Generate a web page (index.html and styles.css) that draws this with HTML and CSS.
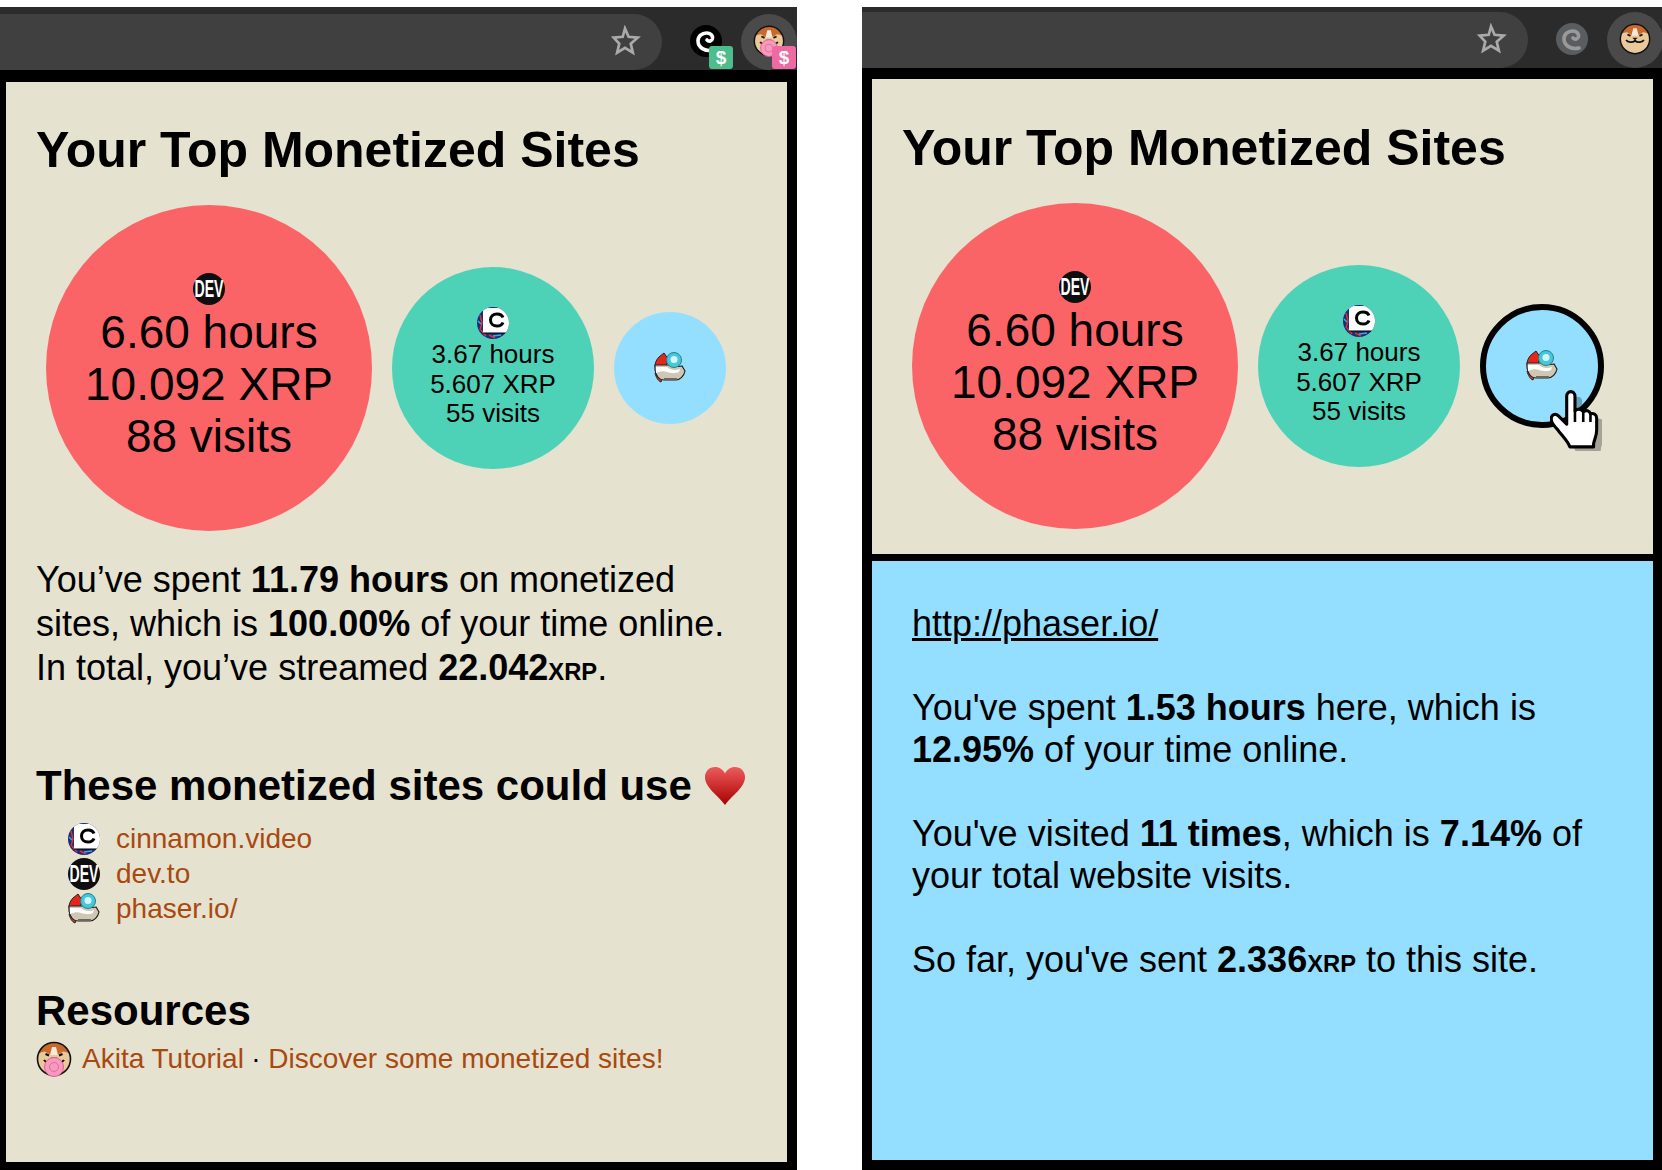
FILE: index.html
```html
<!DOCTYPE html>
<html lang="en">
<head>
    <meta charset="UTF-8">
    <meta name="viewport" content="width=device-width, initial-scale=1.0">
    <title>Akita - Your Top Monetized Sites</title>
    <link rel="stylesheet" href="styles.css">
</head>
<body>
    <svg class="sprites" width="0" height="0">
        <defs>
            <linearGradient id="heartFill" x1="0" y1="0" x2="0" y2="1">
                <stop offset="0" stop-color="#ee5b5b"/>
                <stop offset="1" stop-color="#a80000"/>
            </linearGradient>
            <clipPath id="cinnamonClip"><circle cx="16" cy="16" r="16"/></clipPath>
            <clipPath id="akitaClip"><circle cx="18" cy="18" r="16"/></clipPath>
            <symbol id="icon-star" viewBox="0 0 24 24">
                <path d="M12 2.6l2.7 6.3 6.8.6-5.200 4.500 1.600 6.700-5.900-3.600-5.900 3.600 1.600-6.700L3.500 9.500l6.800-.6z" fill="none" stroke="#aaaaaa" stroke-width="2"/>
            </symbol>
            <symbol id="icon-dev" viewBox="0 0 32 32">
                <circle cx="16" cy="16" r="16" fill="#0e0e10"/>
                <text x="16" y="24" text-anchor="middle" class="dev-text" textLength="29" lengthAdjust="spacingAndGlyphs">DEV</text>
            </symbol>
            <symbol id="icon-cinnamon" viewBox="0 0 32 32">
                <g clip-path="url(#cinnamonClip)">
                    <rect width="32" height="32" fill="#1c2a78"/>
                    <path d="M3 8l2 8-2 7M4 23l5 6M12 28l6 3" stroke="#d8342c" stroke-width="1.5" fill="none"/>
                    <path d="M1 14l3 3M16 29l8-1" stroke="#3fa7d6" stroke-width="1.5" fill="none"/>
                    <rect x="6" y="1" width="26" height="25" fill="#ffffff"/>
                    <path d="M6 26h26" stroke="#000000" stroke-width="1"/>
                    <path d="M26 10.500c-1-2.500-3.500-3.500-6-3.500-3.800 0-6.500 2.200-6.500 6s2.700 6 6.500 6c2.500 0 5-1 6-3.500" fill="none" stroke="#000000" stroke-width="3"/>
                </g>
            </symbol>
            <symbol id="icon-phaser" viewBox="0 0 32 32">
                <path d="M5 5l5-4 4 6-2 8H1c0-4 1-7 4-10z" fill="#e5261c" stroke="#222222"/>
                <path d="M1 21l9 2-3 7c-3-1-5-5-6-9z" fill="#d9401a" stroke="#222222"/>
                <path d="M1 13h14c4 1 9 2 13 1l3 5c-1 5-5 9-9 9H10c-5 0-8-5-9-10z" fill="#cfc6b4" stroke="#222222" stroke-width="1.2"/>
                <path d="M2 15h11c3 3 8 4 13 2l-1 3c-4 2-9 1-12 0-3-1-6-1-11 1z" fill="#ffffff"/>
                <path d="M10 27h13" stroke="#6f685a" stroke-width="2"/>
                <circle cx="20" cy="8" r="7.500" fill="#45c8da" stroke="#2a7f8c"/>
                <circle cx="20" cy="7.500" r="3.500" fill="#d4f6fa"/>
            </symbol>
            <symbol id="icon-curl" viewBox="0 0 32 32">
                <circle cx="16" cy="16" r="16" fill="currentColor"/>
                <path d="M23 25c-7 2-15-2-15-9 0-5 4-8 8.500-8 4 0 6.500 2.500 6 5.500-.5 2.500-3.500 3.500-5.500 1.500" fill="none" stroke="var(--curl, #ffffff)" stroke-width="3.600" stroke-linecap="round"/>
            </symbol>
            <symbol id="icon-akita" viewBox="0 0 36 36">
                <circle cx="18" cy="18" r="16.500" fill="#e9c89b"/>
                <g clip-path="url(#akitaClip)">
                    <path d="M0 14C3 6 10 1 18 1s15 5 18 13c-3-2-6-3-9-3.500l-5 3h-8l-5-3C6 11 3 12 0 14z" fill="#c9692c"/>
                    <path d="M14 14l2-8h4l2 8z" fill="#f3ead8"/>
                </g>
                <circle cx="18" cy="18" r="16.500" fill="none" stroke="#111111" stroke-width="1.600"/>
                <path d="M9.500 13l3.500 1.500M26.500 13l-3.500 1.500" stroke="#111111" stroke-width="2"/>
                <path d="M15 16.500h6l-3 3z" fill="#111111"/>
                <path d="M8 19c2 3 7 3.500 10 1 3 2.500 8 2 10-1" fill="none" stroke="#111111" stroke-width="2"/>
            </symbol>
            <symbol id="icon-akita-tongue" viewBox="0 0 36 36">
                <use href="#icon-akita" width="36" height="36"/>
                <circle cx="18" cy="26" r="9.500" fill="#f79ac0" stroke="#e2608f"/>
                <circle cx="18" cy="26" r="4.500" fill="none" stroke="#e2608f" stroke-width=".8"/>
            </symbol>
            <symbol id="icon-heart" viewBox="0 0 42 40">
                <path d="M21 39C14 29 1 22 1 11 1 5 5.500 1 11 1c4.500 0 8 2.500 10 6.500C23 3.500 26.500 1 31 1c5.500 0 10 4 10 10 0 11-13 18-20 28z" fill="url(#heartFill)"/>
            </symbol>
        </defs>
    </svg>

    <div class="screens">
        <section class="popup popup-main">
            <div class="toolbar">
                <div class="urlbar"><svg class="star"><use href="#icon-star"/></svg></div>
                <div class="ext">
                    <svg class="ext-icon"><use href="#icon-curl"/></svg>
                    <span class="badge badge-green">$</span>
                </div>
                <div class="ext ext-active">
                    <svg class="ext-icon"><use href="#icon-akita-tongue"/></svg>
                    <span class="badge badge-pink">$</span>
                </div>
            </div>
            <div class="panel panel-grow">
                <h1>Your Top Monetized Sites</h1>
                <div class="bubbles">
                    <div class="bubble bubble-red">
                        <svg class="bubble-icon"><use href="#icon-dev"/></svg>
                        <div>6.60 hours</div><div>10.092 XRP</div><div>88 visits</div>
                    </div>
                    <div class="bubble bubble-green">
                        <svg class="bubble-icon"><use href="#icon-cinnamon"/></svg>
                        <div>3.67 hours</div><div>5.607 XRP</div><div>55 visits</div>
                    </div>
                    <div class="bubble bubble-blue">
                        <svg class="bubble-icon"><use href="#icon-phaser"/></svg>
                    </div>
                </div>
                <p class="summary">You&rsquo;ve spent <b>11.79 hours</b> on monetized sites, which is <b>100.00%</b> of your time online. In total, you&rsquo;ve streamed <b>22.042<small>XRP</small></b>.</p>
                <h2 class="love">These monetized sites could use <svg class="heart"><use href="#icon-heart"/></svg></h2>
                <ul class="sites">
                    <li><svg class="site-icon"><use href="#icon-cinnamon"/></svg><a href="#">cinnamon.video</a></li>
                    <li><svg class="site-icon"><use href="#icon-dev"/></svg><a href="#">dev.to</a></li>
                    <li><svg class="site-icon"><use href="#icon-phaser"/></svg><a href="#">phaser.io/</a></li>
                </ul>
                <h2 class="resources">Resources</h2>
                <div class="links">
                    <svg class="akita-icon"><use href="#icon-akita-tongue"/></svg>
                    <a href="#">Akita Tutorial</a><span class="dot">&middot;</span><a href="#">Discover some monetized sites!</a>
                </div>
            </div>
        </section>

        <section class="popup popup-detail">
            <div class="toolbar">
                <div class="urlbar"><svg class="star"><use href="#icon-star"/></svg></div>
                <div class="ext">
                    <svg class="ext-icon curl-grey"><use href="#icon-curl"/></svg>
                </div>
                <div class="ext ext-active">
                    <svg class="ext-icon"><use href="#icon-akita"/></svg>
                </div>
            </div>
            <div class="panel">
                <h1>Your Top Monetized Sites</h1>
                <div class="bubbles">
                    <div class="bubble bubble-red">
                        <svg class="bubble-icon"><use href="#icon-dev"/></svg>
                        <div>6.60 hours</div><div>10.092 XRP</div><div>88 visits</div>
                    </div>
                    <div class="bubble bubble-green">
                        <svg class="bubble-icon"><use href="#icon-cinnamon"/></svg>
                        <div>3.67 hours</div><div>5.607 XRP</div><div>55 visits</div>
                    </div>
                    <div class="bubble bubble-blue bubble-hover">
                        <svg class="bubble-icon"><use href="#icon-phaser"/></svg>
                        <svg class="hand" viewBox="0 0 50 60">
                            <path d="M19 8c0-6 8-6 8 0v14c3-2 6-2 8 1 3-2 6-1 7 2 3-1 6 1 6 4v12c0 5-2 8-3 13v5H22c-2-6-8-11-12-17-3-3-7-7-8-10 0-4 4-6 7-3l10 9z" fill="#000000" opacity=".28" transform="translate(4 4)"/>
                            <path d="M16 7c0-6 8-6 8 0v14c3-2 6-2 8 1 3-2 6-1 7 2 3-1 6 1 6 4v12c0 5-2 8-3 13v3H19c-2-6-8-11-12-17-3-3-6-7-6-10 0-4 4-6 7-3l8 8z" fill="#ffffff" stroke="#000000" stroke-width="3" stroke-linejoin="round"/>
                            <path d="M24 21v11M32 22v10M39 24v8" stroke="#000000" stroke-width="2.5" fill="none"/>
                        </svg>
                    </div>
                </div>
            </div>
            <div class="detail">
                <a href="#" class="detail-url">http://phaser.io/</a>
                <p>You've spent <b>1.53 hours</b> here, which is <b>12.95%</b> of your time online.</p>
                <p>You've visited <b>11 times</b>, which is <b>7.14%</b> of your total website visits.</p>
                <p>So far, you've sent <b>2.336<small>XRP</small></b> to this site.</p>
            </div>
        </section>
    </div>
</body>
</html>
```

FILE: styles.css
```css
html, body {
    margin: 0;
    padding: 0;
    background-color: #ffffff;
}

body {
    font-family: 'Liberation Sans', Arial, sans-serif;
    color: #000000;
    height: 1170px;
    overflow: hidden;
}

.sprites {
    position: absolute;
}

.screens {
    display: flex;
    justify-content: space-between;
    height: 1163px;
    padding-top: 7px;
}

.popup {
    display: flex;
    flex-direction: column;
    background-color: #000000;
    overflow: hidden;
}

.popup-main {
    width: 797px;
    padding: 0 10px 8px 6px;
    box-sizing: border-box;
}

.popup-detail {
    width: 800px;
    padding: 0 9px 10px 10px;
    box-sizing: border-box;
}

.toolbar {
    display: flex;
    align-items: flex-end;
    height: 63px;
    margin: 0 -10px;
    background-color: #2b2b2b;
    flex-shrink: 0;
}

.popup-detail .toolbar {
    height: 61px;
}

.urlbar {
    display: flex;
    align-items: center;
    justify-content: flex-end;
    width: 667px;
    height: 56px;
    padding: 0 21px 2px 0;
    box-sizing: border-box;
    background-color: #404040;
    border-radius: 0 28px 28px 0;
}

.star {
    width: 32px;
    height: 32px;
}

.ext {
    position: relative;
    display: flex;
    align-items: center;
    justify-content: center;
    width: 32px;
    height: 56px;
    margin-left: 28px;
    padding-bottom: 2px;
    box-sizing: border-box;
}

.ext-active {
    width: 56px;
    margin-left: 19px;
    background-color: #4a4a4a;
    border-radius: 28px;
}

.ext-icon {
    width: 32px;
    height: 32px;
    color: #000000;
}

.curl-grey {
    color: #5a5d60;
    --curl: #9a9a9a;
}

.badge {
    position: absolute;
    left: 19px;
    bottom: 1px;
    width: 24px;
    height: 23px;
    border-radius: 3px;
    color: #ffffff;
    font-size: 19px;
    font-weight: bold;
    line-height: 23px;
    text-align: center;
}

.ext-active .badge {
    left: 31px;
}

.badge-green {
    background-color: #4dbd8c;
}

.badge-pink {
    background-color: #ee6aa2;
}

.panel {
    margin-top: 11px;
    padding: 0 30px;
    background-color: #e5e2d0;
    height: 475px;
    flex-shrink: 0;
    box-sizing: border-box;
}

.panel-grow {
    flex: 1;
    height: auto;
    margin-top: 12px;
}

h1 {
    margin: 0;
    padding-top: 38px;
    font-size: 50px;
    line-height: 60px;
    font-weight: bold;
}

.popup-detail h1 {
    padding-top: 39px;
}

.bubbles {
    display: flex;
    align-items: center;
    gap: 20px;
    margin-top: 25px;
    margin-left: 10px;
}

.bubble {
    display: flex;
    flex-direction: column;
    align-items: center;
    justify-content: center;
    border-radius: 50%;
    text-align: center;
    flex-shrink: 0;
    position: relative;
    box-sizing: border-box;
}

.bubble-red {
    width: 326px;
    height: 326px;
    padding-bottom: 2px;
    background-color: #fb6467;
    font-size: 46px;
    line-height: 52px;
}

.bubble-red .bubble-icon {
    width: 32px;
    height: 32px;
    margin-bottom: 1px;
}

.bubble-green {
    width: 202px;
    height: 202px;
    background-color: #4dd2b7;
    font-size: 26px;
    line-height: 29.5px;
}

.bubble-green .bubble-icon {
    width: 32px;
    height: 32px;
    margin-bottom: 1px;
}

.bubble-blue {
    width: 112px;
    height: 112px;
    background-color: #94dfff;
}

.bubble-blue .bubble-icon {
    width: 32px;
    height: 32px;
}

.bubble-hover {
    width: 124px;
    height: 124px;
    border: 6px solid #000000;
}

.dev-text {
    font-family: 'Liberation Sans', sans-serif;
    font-size: 24px;
    font-weight: bold;
    fill: #ffffff;
}

.hand {
    position: absolute;
    left: 64px;
    top: 79px;
    width: 52px;
    height: 62px;
}

small {
    font-size: 0.66em;
}

.summary {
    margin: 27px 0 0;
    font-size: 36px;
    line-height: 44px;
}

h2 {
    margin: 0;
    font-size: 42px;
    line-height: 50px;
    font-weight: bold;
}

.love {
    margin-top: 67px;
    display: flex;
    align-items: center;
    gap: 12px;
}

.heart {
    width: 42px;
    height: 40px;
}

.sites {
    list-style: none;
    margin: 10px 0 0;
    padding: 0 0 0 32px;
}

.sites li {
    display: flex;
    align-items: center;
    gap: 16px;
    height: 35px;
}

.site-icon {
    width: 32px;
    height: 32px;
}

a {
    color: #a9490f;
    text-decoration: none;
}

.sites a,
.links a {
    font-size: 28px;
}

.resources {
    margin-top: 60px;
}

.links {
    display: flex;
    align-items: center;
    margin-top: 5px;
    font-size: 28px;
}

.akita-icon {
    width: 36px;
    height: 36px;
    margin-right: 10px;
}

.dot {
    margin: 0 7.5px;
}

.detail {
    flex: 1;
    margin-top: 7px;
    padding: 42px 40px;
    background-color: #94dfff;
    font-size: 36px;
    line-height: 42px;
}

.detail p {
    margin: 42px 0 0;
}

.detail-url {
    color: #000000;
    text-decoration: underline;
}
```
